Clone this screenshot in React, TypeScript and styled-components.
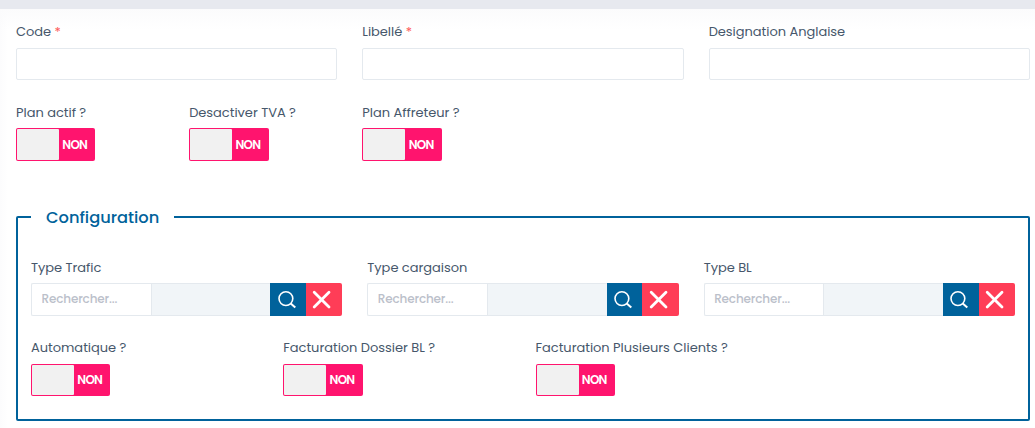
import React from 'react';
import styled, { createGlobalStyle } from 'styled-components';

const GlobalStyle = createGlobalStyle`
  * { box-sizing: border-box; }
  body {
    margin: 0;
    background: #fff;
    color: #46576b;
    font-family: Poppins, Inter, "Open Sans", sans-serif;
    font-size: 13px;
  }
  input, button { font: inherit; }
`;

const Page = styled.div`
  height: 428px;
  overflow: hidden;
  background: linear-gradient(90deg, #fcfcfd 0, rgba(255, 255, 255, 0) 8px);
`;

const TopStrip = styled.div`
  height: 9px;
  background: #e7e9ef;
`;

const Form = styled.form`
  padding: 13px 5px 0 16px;
  background: linear-gradient(180deg, #fbfbfc 0, rgba(255, 255, 255, 0) 21px);
`;

const Row = styled.div<{ $columns: number; $top?: number }>`
  display: grid;
  grid-template-columns: repeat(${p => p.$columns}, minmax(0, 1fr));
  column-gap: 25px;
  margin-top: ${p => p.$top ?? 0}px;
`;

const Field = styled.div`
  display: flex;
  flex-direction: column;
  align-items: stretch;
`;

const Label = styled.label<{ $gap: number }>`
  height: 20px;
  line-height: 20px;
  margin-bottom: ${p => p.$gap}px;
  letter-spacing: -0.03px;
  white-space: nowrap;
`;

const Required = styled.span`
  color: #fd5a5a;
`;

const TextInput = styled.input`
  width: 100%;
  height: 32px;
  padding: 0 10px;
  border: 1px solid #e4e9ee;
  border-radius: 2px;
  background: #fff;
  outline: none;
`;

const Toggle = styled.button<{ $height: number }>`
  display: flex;
  width: 79.45px;
  height: ${p => p.$height}px;
  padding: 1px;
  border: 0;
  border-radius: 2px;
  background: #ff146e;
`;

const Knob = styled.span`
  width: 42px;
  height: 100%;
  border-radius: 1px;
  background: #f1f1f1;
`;

const ToggleText = styled.span`
  flex: 1;
  align-self: center;
  padding-right: 4px;
  color: #fff;
  font-size: 12px;
  font-weight: 600;
  letter-spacing: -0.75px;
  line-height: 16px;
  text-align: center;
`;

const Fieldset = styled.fieldset`
  min-width: 0;
  height: 214px;
  margin: 46px 0 0;
  padding: 0 13px;
  border: 2px solid #00629b;
  border-radius: 2px;
`;

const Legend = styled.legend`
  height: 20px;
  padding: 0 15px;
  color: #00629b;
  font-size: 16.25px;
  font-weight: 500;
  line-height: 21px;
`;

const SearchGroup = styled.div`
  display: flex;
  height: 33px;
`;

const SearchInput = styled.input`
  flex: none;
  width: 119.7px;
  padding: 0 0 1px 9.5px;
  border: 1px solid #e4e9ee;
  border-right: 0;
  border-radius: 2px 0 0 2px;
  outline: none;
  font-size: 12px;
  &::placeholder { color: #bbc0ca; opacity: 1; font-weight: 500; letter-spacing: -0.15px; }
`;

const SearchValue = styled.output`
  flex: 1;
  min-width: 0;
  border: solid #e4e9ee;
  border-width: 1px 0 1px 1px;
  background: #f1f5f8;
`;

const IconButton = styled.button<{ $danger?: boolean }>`
  display: flex;
  align-items: center;
  justify-content: center;
  width: ${p => (p.$danger ? 36.3 : 35.7)}px;
  padding: ${p => (p.$danger ? '0 5px 0 0' : '0 4px 0 0')};
  border: 0;
  border-radius: ${p => (p.$danger ? '0 2px 2px 0' : '0')};
  background: ${p => (p.$danger ? '#ff3d57' : '#00629b')};
`;

const SearchIcon = () => (
  <svg width="19" height="19" viewBox="0 0 19 19" fill="none" stroke="#fff" strokeWidth="1.6">
    <circle cx="8.9" cy="8.6" r="6.9" />
    <path d="M13.7 13.4 L18.3 17.6" strokeWidth="2" />
  </svg>
);

const CloseIcon = () => (
  <svg width="19" height="19" viewBox="0 0 19 19" fill="none" stroke="#fff" strokeWidth="2.8" strokeLinecap="round">
    <path d="M2.2 2.2 L17 17 M17 2.2 L2.2 17" />
  </svg>
);

function TextField({ label, required }: { label: string; required?: boolean }) {
  return (
    <Field>
      <Label $gap={6}>
        {label}
        {required && <Required> *</Required>}
      </Label>
      <TextInput />
    </Field>
  );
}

function ToggleField({ label, height = 33 }: { label: string; height?: number }) {
  return (
    <Field>
      <Label $gap={height === 33 ? 5 : 6}>{label}</Label>
      <Toggle type="button" $height={height}>
        <Knob />
        <ToggleText>NON</ToggleText>
      </Toggle>
    </Field>
  );
}

function LookupField({ label }: { label: string }) {
  return (
    <Field>
      <Label $gap={5}>{label}</Label>
      <SearchGroup>
        <SearchInput placeholder="Rechercher..." />
        <SearchValue />
        <IconButton type="button"><SearchIcon /></IconButton>
        <IconButton type="button" $danger><CloseIcon /></IconButton>
      </SearchGroup>
    </Field>
  );
}

export default function App() {
  return (
    <Page>
      <GlobalStyle />
      <TopStrip />
      <Form>
        <Row $columns={3}>
          <TextField label="Code" required />
          <TextField label="Libellé" required />
          <TextField label="Designation Anglaise" />
        </Row>
        <Row $columns={6} $top={23}>
          <ToggleField label="Plan actif ?" />
          <ToggleField label="Desactiver TVA ?" />
          <ToggleField label="Plan Affreteur ?" />
        </Row>
        <Fieldset>
          <Legend>Configuration</Legend>
          <Row $columns={3} $top={31}>
            <LookupField label="Type Trafic" />
            <LookupField label="Type cargaison" />
            <LookupField label="Type BL" />
          </Row>
          <Row $columns={4} $top={22}>
            <ToggleField label="Automatique ?" height={32} />
            <ToggleField label="Facturation Dossier BL ?" height={32} />
            <ToggleField label="Facturation Plusieurs Clients ?" height={32} />
          </Row>
        </Fieldset>
      </Form>
    </Page>
  );
}
